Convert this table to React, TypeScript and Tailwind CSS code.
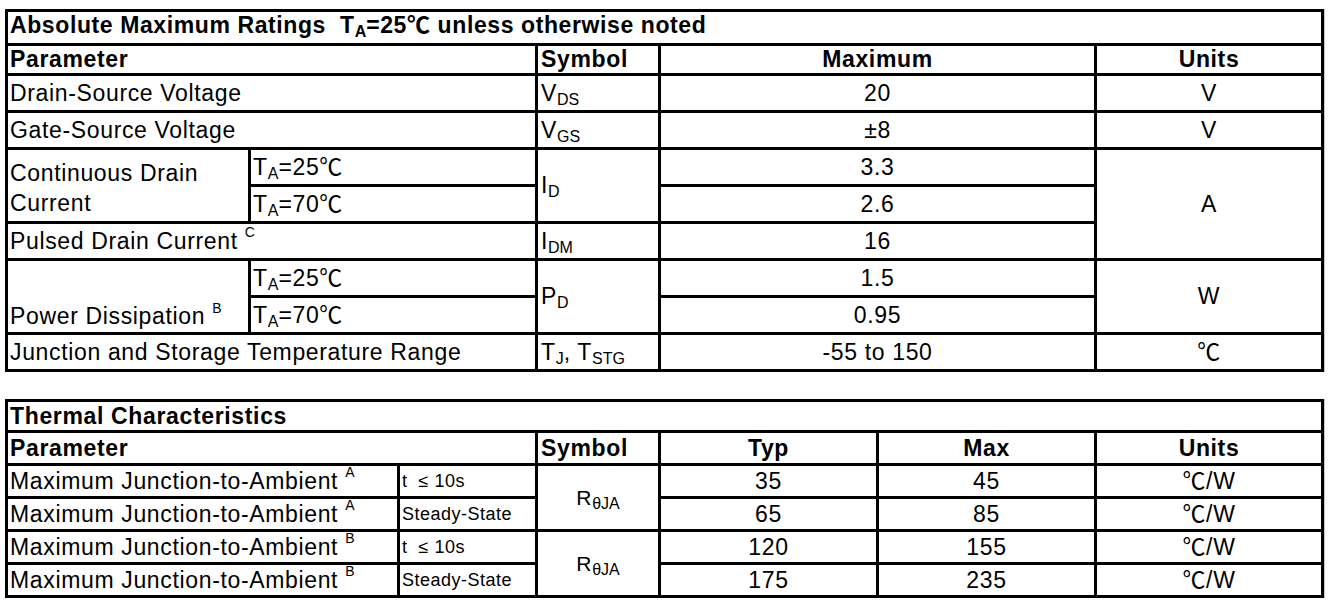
import React from 'react';
import { twMerge } from 'tailwind-merge';

// Datasheet rating tables, drawn as two CSS grids with 3px black rules
const font = "font-['Liberation_Sans','Noto_Sans_CJK_SC',sans-serif]";

function Cell({ className = '', children }: { className?: string; children?: React.ReactNode }) {
  return (
    <div
      className={twMerge(
        'flex items-center bg-white text-[23px] leading-[27px] tracking-[0.65px] text-black whitespace-pre',
        className
      )}
    >
      <span>{children}</span>
    </div>
  );
}

function Sub({ children }: { children: React.ReactNode }) {
  return <sub className="text-[16px] tracking-normal bottom-[-0.25em]">{children}</sub>;
}

function Sup({ children }: { children: React.ReactNode }) {
  return <sup className="text-[14px] tracking-normal top-[-0.8em]">{children}</sup>;
}

function TA({ t }: { t: string }) {
  return (
    <>
      T<Sub>A</Sub>={t}℃
    </>
  );
}

function AbsoluteRatings() {
  return (
    <div className="grid w-fit gap-[3px] bg-black p-[3px] shadow-[1px_0_0_#c8c8c8] grid-cols-[240px_284px_120px_433px_224px] grid-rows-[31px_27px_repeat(8,34px)]">
      <Cell className="col-start-1 col-span-5 row-start-1 pl-[2px] pb-[4px] font-bold tracking-[0.6px]">
        Absolute Maximum Ratings  T<Sub>A</Sub>=25℃ unless otherwise noted
      </Cell>

      <Cell className="col-start-1 col-span-2 row-start-2 pl-[2px] font-bold">Parameter</Cell>
      <Cell className="col-start-3 row-start-2 pl-[3px] font-bold">Symbol</Cell>
      <Cell className="col-start-4 row-start-2 justify-center font-bold">Maximum</Cell>
      <Cell className="col-start-5 row-start-2 justify-center font-bold">Units</Cell>

      <Cell className="col-start-1 col-span-2 row-start-3 pl-[2px]">Drain-Source Voltage</Cell>
      <Cell className="col-start-3 row-start-3 pl-[3px]">V<Sub>DS</Sub></Cell>
      <Cell className="col-start-4 row-start-3 justify-center">20</Cell>
      <Cell className="col-start-5 row-start-3 justify-center">V</Cell>

      <Cell className="col-start-1 col-span-2 row-start-4 pl-[2px]">Gate-Source Voltage</Cell>
      <Cell className="col-start-3 row-start-4 pl-[3px]">V<Sub>GS</Sub></Cell>
      <Cell className="col-start-4 row-start-4 justify-center">±8</Cell>
      <Cell className="col-start-5 row-start-4 justify-center">V</Cell>

      <Cell className="col-start-1 row-start-5 row-span-2 items-end pl-[2px] pb-[3px] leading-[30px]">
        Continuous Drain{'\n'}Current
      </Cell>
      <Cell className="col-start-2 row-start-5 pl-[2px]"><TA t="25" /></Cell>
      <Cell className="col-start-3 row-start-5 row-span-2 pl-[3px]">I<Sub>D</Sub></Cell>
      <Cell className="col-start-4 row-start-5 justify-center">3.3</Cell>
      <Cell className="col-start-5 row-start-5 row-span-3 justify-center">A</Cell>

      <Cell className="col-start-2 row-start-6 pl-[2px]"><TA t="70" /></Cell>
      <Cell className="col-start-4 row-start-6 justify-center">2.6</Cell>

      <Cell className="col-start-1 col-span-2 row-start-7 pl-[2px]">Pulsed Drain Current <Sup>C</Sup></Cell>
      <Cell className="col-start-3 row-start-7 pl-[3px]">I<Sub>DM</Sub></Cell>
      <Cell className="col-start-4 row-start-7 justify-center">16</Cell>

      <Cell className="col-start-1 row-start-8 row-span-2 items-end pl-[2px] pb-[2px]">
        Power Dissipation <Sup>B</Sup>
      </Cell>
      <Cell className="col-start-2 row-start-8 pl-[2px]"><TA t="25" /></Cell>
      <Cell className="col-start-3 row-start-8 row-span-2 pl-[3px]">P<Sub>D</Sub></Cell>
      <Cell className="col-start-4 row-start-8 justify-center">1.5</Cell>
      <Cell className="col-start-5 row-start-8 row-span-2 justify-center">W</Cell>

      <Cell className="col-start-2 row-start-9 pl-[2px]"><TA t="70" /></Cell>
      <Cell className="col-start-4 row-start-9 justify-center">0.95</Cell>

      <Cell className="col-start-1 col-span-2 row-start-10 pl-[2px]">Junction and Storage Temperature Range</Cell>
      <Cell className="col-start-3 row-start-10 pl-[3px]">T<Sub>J</Sub>, T<Sub>STG</Sub></Cell>
      <Cell className="col-start-4 row-start-10 justify-center">-55 to 150</Cell>
      <Cell className="col-start-5 row-start-10 justify-center">℃</Cell>
    </div>
  );
}

const thermalRows = [
  { note: 'A', cond: 't  ≤ 10s', typ: '35', max: '45' },
  { note: 'A', cond: 'Steady-State', typ: '65', max: '85' },
  { note: 'B', cond: 't  ≤ 10s', typ: '120', max: '155' },
  { note: 'B', cond: 'Steady-State', typ: '175', max: '235' },
];

const rowStart = ['row-start-3', 'row-start-4', 'row-start-5', 'row-start-6'];

function Thermal() {
  return (
    <div className="grid w-fit gap-[3px] bg-black p-[3px] shadow-[1px_0_0_#c8c8c8] grid-cols-[389px_135px_120px_215px_215px_224px] grid-rows-[28px_30px_repeat(4,30px)]">
      <Cell className="col-start-1 col-span-6 row-start-1 pl-[2px] font-bold">Thermal Characteristics</Cell>

      <Cell className="col-start-1 col-span-2 row-start-2 pl-[2px] font-bold">Parameter</Cell>
      <Cell className="col-start-3 row-start-2 pl-[3px] font-bold">Symbol</Cell>
      <Cell className="col-start-4 row-start-2 justify-center font-bold">Typ</Cell>
      <Cell className="col-start-5 row-start-2 justify-center font-bold">Max</Cell>
      <Cell className="col-start-6 row-start-2 justify-center font-bold">Units</Cell>

      {thermalRows.map((r, i) => (
        <React.Fragment key={i}>
          <Cell className={`col-start-1 ${rowStart[i]} pl-[2px]`}>
            Maximum Junction-to-Ambient <Sup>{r.note}</Sup>
          </Cell>
          <Cell className={`col-start-2 ${rowStart[i]} pl-[2px] text-[18px] tracking-[0.5px]`}>{r.cond}</Cell>
          <Cell className={`col-start-4 ${rowStart[i]} justify-center`}>{r.typ}</Cell>
          <Cell className={`col-start-5 ${rowStart[i]} justify-center`}>{r.max}</Cell>
          <Cell className={`col-start-6 ${rowStart[i]} justify-center`}>℃/W</Cell>
        </React.Fragment>
      ))}

      <Cell className="col-start-3 row-start-3 row-span-2 justify-center text-[21px]">
        R<Sub>θJA</Sub>
      </Cell>
      <Cell className="col-start-3 row-start-5 row-span-2 justify-center text-[21px]">
        R<Sub>θJA</Sub>
      </Cell>
    </div>
  );
}

export default function App() {
  return (
    <div className={`min-h-screen bg-white pl-[5px] pt-[9px] ${font}`}>
      <AbsoluteRatings />
      <div className="mt-[27px]">
        <Thermal />
      </div>
    </div>
  );
}
